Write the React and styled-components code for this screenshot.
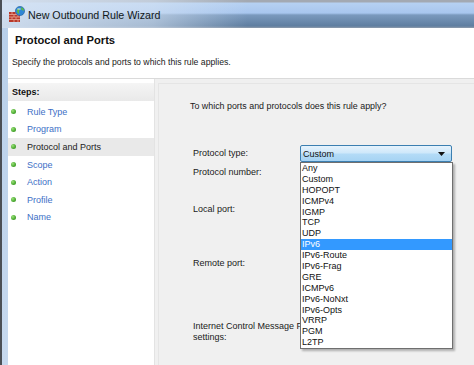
import React from "react";
import styled, { createGlobalStyle } from "styled-components";

const Global = createGlobalStyle`
  html, body { margin: 0; padding: 0; overflow: hidden; background: #f0f0f0; }
  body { font-family: "Liberation Sans", Arial, sans-serif; }
  * { box-sizing: border-box; }
`;

const Window = styled.div`
  width: 474px;
  height: 365px;
  display: flex;
  flex-direction: column;
  border-left: 2px solid #4b4f55;
  background: linear-gradient(to bottom, #b7cfea, #c7d9ee);
  overflow: hidden;
`;

const TitleBar = styled.div`
  height: 28px;
  flex: none;
  display: flex;
  align-items: center;
  gap: 3px;
  padding-left: 6px;
  background:
    linear-gradient(to right, rgba(214, 227, 243, 0.92) 0%, rgba(214, 227, 243, 0.6) 32%, rgba(214, 227, 243, 0) 52%),
    linear-gradient(to bottom, #a3a9b2 0px, #a3a9b2 2px, #b6d1f2 3px, #a8c6ee 13px, #7a99bd 15px, #5f7ea0 26px, #8f9cac 28px);
`;

const TitleText = styled.span`
  font-size: 10.7px;
  color: #101820;
  line-height: 14px;
  margin-top: 1px;
`;

const Client = styled.div`
  flex: 1;
  margin-left: 6px;
  background: #f0f0f0;
  display: flex;
  flex-direction: column;
  min-height: 0;
`;

const Header = styled.div`
  height: 51px;
  flex: none;
  background: #ffffff;
  border-bottom: 1px solid #dadada;
  padding-top: 5.5px;
`;

const HeaderTitle = styled.div`
  font-size: 11.2px;
  font-weight: bold;
  color: #111;
  line-height: 13px;
  padding-left: 7px;
`;

const HeaderDesc = styled.div`
  font-size: 8.7px;
  color: #1a1a1a;
  line-height: 11px;
  margin-top: 10px;
  padding-left: 4px;
`;

const Body = styled.div`
  flex: 1;
  display: flex;
  min-height: 0;
`;

const StepsPanel = styled.div`
  width: 147px;
  flex: none;
  background: #ffffff;
  border-right: 1px solid #e3e3e3;
  padding-top: 4px;
`;

const StepsHeader = styled.div`
  height: 18px;
  line-height: 18px;
  padding-left: 4px;
  font-size: 9px;
  font-weight: bold;
  color: #111;
  background: linear-gradient(to bottom, #f5f5f5, #e9e9e9);
  margin-bottom: 2px;
`;

const StepRow = styled.div`
  height: 17.6px;
  display: flex;
  align-items: center;
  gap: 11px;
  padding-left: 3px;
  font-size: 9px;
  color: ${(p) => (p.$active ? "#222" : "#3d6fc6")};
  background: ${(p) => (p.$active ? "#e9e9e9" : "transparent")};
`;

const Bullet = styled.span`
  width: 5px;
  height: 5px;
  border-radius: 50%;
  flex: none;
  background: radial-gradient(circle at 35% 35%, #9be07a 0%, #4fae34 55%, #2f7f1e 100%);
`;

const Content = styled.div`
  flex: 1;
  margin: 4px 0 0 3px;
  border-top: 1px solid #e5e5e5;
  border-left: 1px solid #e5e5e5;
  padding: 16.5px 0 0 31px;
`;

const Question = styled.div`
  font-size: 8.9px;
  line-height: 11px;
  color: #1a1a1a;
`;

const Form = styled.div`
  margin-top: 33.5px;
  padding-left: 3px;
  display: flex;
  flex-direction: column;
`;

const FormRow = styled.div`
  display: flex;
  align-items: center;
  height: ${(p) => p.$h}px;
  margin-top: ${(p) => p.$mt || 0}px;
`;

const Label = styled.div`
  width: 107px;
  flex: none;
  font-size: 9px;
  line-height: 11px;
  color: #1a1a1a;
  white-space: nowrap;
  overflow: hidden;
`;

const SelectWrap = styled.div`
  position: relative;
  width: 152px;
  height: 17px;
`;

const SelectBox = styled.div`
  width: 100%;
  height: 100%;
  border: 1px solid #3c7fb1;
  border-radius: 2px;
  background: linear-gradient(to bottom, #e6f3fd 0%, #cfe8fa 45%, #b3dbf7 55%, #a6d3f3 100%);
  display: flex;
  align-items: center;
  justify-content: space-between;
  padding: 0 6px 0 2px;
  font-size: 9px;
  color: #111;
`;

const Arrow = styled.svg`
  width: 7px;
  height: 4px;
`;

const List = styled.div`
  position: absolute;
  top: 100%;
  left: 0;
  width: 153px;
  background: #ffffff;
  border: 1px solid #6f6f6f;
  box-shadow: 2px 2px 2px rgba(0, 0, 0, 0.28);
  z-index: 5;
`;

const Item = styled.div`
  height: 10.9px;
  line-height: 10.9px;
  padding-left: 1px;
  font-size: 9px;
  color: ${(p) => (p.$selected ? "#ffffff" : "#111")};
  background: ${(p) => (p.$selected ? "#3399ff" : "transparent")};
`;

const FirewallIcon = () => (
  <svg width="17" height="17" viewBox="0 0 17 17">
    <rect x="1" y="6" width="11" height="10" fill="#b8392b" />
    <g stroke="#e9a896" strokeWidth="0.8">
      <line x1="1" y1="8.5" x2="12" y2="8.5" />
      <line x1="1" y1="11" x2="12" y2="11" />
      <line x1="1" y1="13.5" x2="12" y2="13.5" />
      <line x1="4" y1="6" x2="4" y2="8.5" />
      <line x1="8" y1="6" x2="8" y2="8.5" />
      <line x1="6" y1="8.5" x2="6" y2="11" />
      <line x1="10" y1="8.5" x2="10" y2="11" />
      <line x1="4" y1="11" x2="4" y2="13.5" />
      <line x1="8" y1="11" x2="8" y2="13.5" />
      <line x1="6" y1="13.5" x2="6" y2="16" />
      <line x1="10" y1="13.5" x2="10" y2="16" />
    </g>
    <circle cx="12" cy="5" r="4.6" fill="#2f86d6" stroke="#1f5e9c" strokeWidth="0.6" />
    <path d="M9.5 2.8 C11 2.2 12 3.4 11.2 4.6 C10.5 5.6 11.5 6.6 10.6 8 C9.4 7.2 8.6 5.6 9.5 2.8 Z" fill="#5fbf3a" />
    <path d="M13.2 1.2 C14.8 1.8 16 3.2 16 4.6 C14.8 4.8 14.2 3.6 13.2 3.4 Z" fill="#5fbf3a" />
    <ellipse cx="11" cy="3" rx="2" ry="1" fill="rgba(255,255,255,0.45)" />
  </svg>
);

const steps = ["Rule Type", "Program", "Protocol and Ports", "Scope", "Action", "Profile", "Name"];
const protocols = [
  "Any", "Custom", "HOPOPT", "ICMPv4", "IGMP", "TCP", "UDP", "IPv6", "IPv6-Route",
  "IPv6-Frag", "GRE", "ICMPv6", "IPv6-NoNxt", "IPv6-Opts", "VRRP", "PGM", "L2TP",
];

export default function App() {
  return (
    <>
      <Global />
      <Window>
        <TitleBar>
          <FirewallIcon />
          <TitleText>New Outbound Rule Wizard</TitleText>
        </TitleBar>
        <Client>
          <Header>
            <HeaderTitle>Protocol and Ports</HeaderTitle>
            <HeaderDesc>Specify the protocols and ports to which this rule applies.</HeaderDesc>
          </Header>
          <Body>
            <StepsPanel>
              <StepsHeader>Steps:</StepsHeader>
              {steps.map((s) => (
                <StepRow key={s} $active={s === "Protocol and Ports"}>
                  <Bullet />
                  {s}
                </StepRow>
              ))}
            </StepsPanel>
            <Content>
              <Question>To which ports and protocols does this rule apply?</Question>
              <Form>
                <FormRow $h={17}>
                  <Label>Protocol type:</Label>
                  <SelectWrap>
                    <SelectBox>
                      Custom
                      <Arrow viewBox="0 0 7 4">
                        <path d="M0 0 H7 L3.5 4 Z" fill="#111" />
                      </Arrow>
                    </SelectBox>
                    <List>
                      {protocols.map((p) => (
                        <Item key={p} $selected={p === "IPv6"}>{p}</Item>
                      ))}
                    </List>
                  </SelectWrap>
                </FormRow>
                <FormRow $h={12} $mt={4}>
                  <Label>Protocol number:</Label>
                </FormRow>
                <FormRow $h={12} $mt={25}>
                  <Label>Local port:</Label>
                </FormRow>
                <FormRow $h={12} $mt={42}>
                  <Label>Remote port:</Label>
                </FormRow>
                <FormRow $h={22} $mt={51.5}>
                  <Label>
                    Internet Control Message Protocol (ICMP)
                    <br />
                    settings:
                  </Label>
                </FormRow>
              </Form>
            </Content>
          </Body>
        </Client>
      </Window>
    </>
  );
}
